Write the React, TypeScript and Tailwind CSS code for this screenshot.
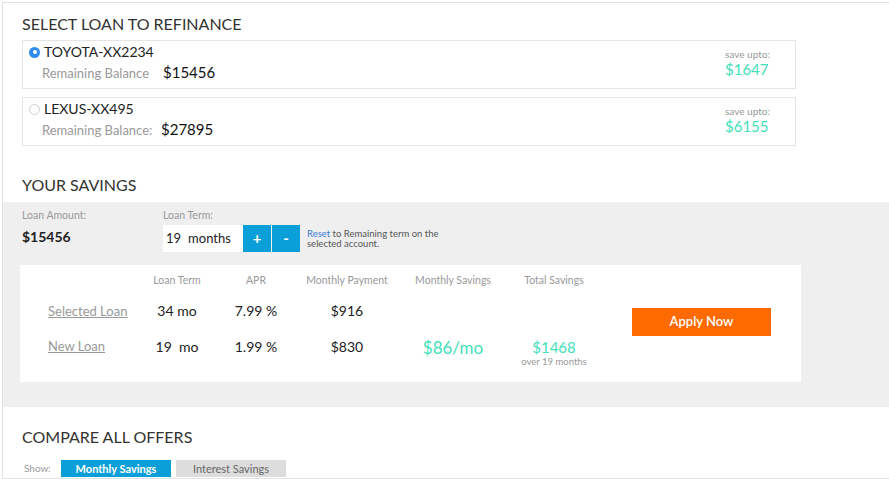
import React, { useState } from 'react';

const loans = [
  { id: 'toyota', name: 'TOYOTA-XX2234', label: 'Remaining Balance', balance: '$15456', save: '$1647' },
  { id: 'lexus', name: 'LEXUS-XX495', label: 'Remaining Balance:', balance: '$27895', save: '$6155' },
];

export default function App() {
  const [selected, setSelected] = useState('toyota');
  const [term, setTerm] = useState(19);
  const [mode, setMode] = useState<'monthly' | 'interest'>('monthly');

  return (
    <div className="w-[889px] h-[479px] bg-white overflow-hidden pt-[2px] pl-[2px] font-['Lato','Open_Sans',sans-serif] text-[#222]">
      <div className="h-full border-l border-t border-[#e3e3e3] border-b">
        <h2 className="pl-[19px] pt-[10px] text-[16px] leading-[22px] text-[#333]">SELECT LOAN TO REFINANCE</h2>

        <div className="mt-[5px] ml-[19px] w-[774px] flex flex-col gap-[8px]">
          {loans.map((loan) => (
            <div
              key={loan.id}
              onClick={() => setSelected(loan.id)}
              className="h-[49px] border border-[#e5e5e5] flex justify-between cursor-pointer"
            >
              <div className="pl-[6px] pt-[2px]">
                <div className="flex items-center gap-[4px]">
                  {selected === loan.id ? (
                    <span className="w-[11px] h-[11px] rounded-full bg-[#2d8cf0] flex items-center justify-center">
                      <span className="w-[4px] h-[4px] rounded-full bg-white" />
                    </span>
                  ) : (
                    <span className="w-[11px] h-[11px] rounded-full border border-[#d0d0d0] bg-white" />
                  )}
                  <span className="text-[14px] leading-[18px] text-[#222]">{loan.name}</span>
                </div>
                <div className="flex items-baseline pl-[13px] mt-[2px] leading-[18px]">
                  <span className={`text-[13px] text-[#999] ${loan.id === 'toyota' ? 'w-[121px]' : 'w-[119px]'}`}>{loan.label}</span>
                  <span className="text-[15px] text-[#111]">{loan.balance}</span>
                </div>
              </div>
              <div className="w-[70px] pt-[7px]">
                <div className="text-[10px] leading-[12px] text-[#999]">save upto:</div>
                <div className="text-[15px] leading-[18px] text-[#43dfba]">{loan.save}</div>
              </div>
            </div>
          ))}
        </div>

        <h2 className="pl-[19px] mt-[28px] text-[16px] leading-[22px] text-[#333]">YOUR SAVINGS</h2>

        <div className="mt-[6px] bg-[#efefef] h-[205px] pt-[7px]">
          <div className="flex pl-[19px]">
            <div className="w-[141px]">
              <div className="text-[10.5px] leading-[13px] text-[#999]">Loan Amount:</div>
              <div className="text-[14px] font-bold text-[#222] mt-[4px]">$15456</div>
            </div>
            <div>
              <div className="text-[10.5px] leading-[13px] text-[#999]">Loan Term:</div>
              <div className="flex items-center mt-[3px]">
                <div className="w-[80px] h-[27px] bg-white flex items-center pl-[3px] text-[13px] text-[#222]">
                  <span>{term}</span>
                  <span className="ml-[7px]">months</span>
                </div>
                <button
                  onClick={() => setTerm(term + 1)}
                  className="w-[28px] h-[27px] bg-[#0a9fd8] text-white text-[15px] font-bold flex items-center justify-center"
                >
                  +
                </button>
                <button
                  onClick={() => setTerm(Math.max(1, term - 1))}
                  className="ml-[1px] w-[28px] h-[27px] bg-[#0a9fd8] text-white text-[15px] font-bold flex items-center justify-center"
                >
                  -
                </button>
                <div className="ml-[7px] text-[9.5px] leading-[10px] text-[#555]">
                  <span className="text-[#3a7bd5]">Reset</span> to Remaining term on the
                  <br />
                  selected account.
                </div>
              </div>
            </div>
          </div>

          <div className="mt-[13px] ml-[17px] w-[781px] h-[117px] bg-white flex">
            <div className="w-[130px] pt-[38px] pl-[28px] text-[13px] text-[#999]">
              <div className="underline leading-[16px]">Selected Loan</div>
              <div className="underline leading-[16px] mt-[19px]">New Loan</div>
            </div>
            <div className="w-[54px] text-center">
              <div className="text-[10.5px] text-[#999] mt-[9px] leading-[12px]">Loan Term</div>
              <div className="text-[14px] mt-[16px] leading-[18px]">34 mo</div>
              <div className="text-[14px] mt-[18px] leading-[18px]">19&nbsp; mo</div>
            </div>
            <div className="w-[56px] text-center ml-[24px]">
              <div className="text-[10.5px] text-[#999] mt-[9px] leading-[12px]">APR</div>
              <div className="text-[14px] mt-[16px] leading-[18px]">7.99 %</div>
              <div className="text-[14px] mt-[18px] leading-[18px]">1.99 %</div>
            </div>
            <div className="w-[100px] text-center ml-[13px]">
              <div className="text-[10.5px] text-[#999] mt-[9px] leading-[12px]">Monthly Payment</div>
              <div className="text-[14px] mt-[16px] leading-[18px]">$916</div>
              <div className="text-[14px] mt-[18px] leading-[18px]">$830</div>
            </div>
            <div className="w-[100px] text-center ml-[6px]">
              <div className="text-[10.5px] text-[#999] mt-[9px] leading-[12px]">Monthly Savings</div>
              <div className="text-[17px] text-[#43dfba] mt-[52px] leading-[20px]">$86/mo</div>
            </div>
            <div className="w-[102px] text-center">
              <div className="text-[10.5px] text-[#999] mt-[9px] leading-[12px]">Total Savings</div>
              <div className="text-[15px] text-[#43dfba] mt-[52px] leading-[18px]">$1468</div>
              <div className="text-[9.5px] text-[#999] leading-[11px]">over 19 months</div>
            </div>
            <div className="pl-[27px] pt-[43px]">
              <button className="w-[139px] h-[28px] bg-[#ff6a00] text-white text-[13px] font-semibold">Apply Now</button>
            </div>
          </div>
        </div>

        <h2 className="pl-[19px] mt-[19px] text-[16px] leading-[22px] text-[#333]">COMPARE ALL OFFERS</h2>

        <div className="flex items-center pl-[21px] mt-[12px]">
          <span className="text-[10px] text-[#999] w-[37px]">Show:</span>
          <button
            onClick={() => setMode('monthly')}
            className={`w-[110px] h-[17px] text-[11px] leading-[17px] ${mode === 'monthly' ? 'bg-[#0a9fd8] text-white font-bold' : 'bg-[#ddd] text-[#666]'}`}
          >
            Monthly Savings
          </button>
          <button
            onClick={() => setMode('interest')}
            className={`ml-[5px] w-[110px] h-[17px] text-[11px] leading-[17px] ${mode === 'interest' ? 'bg-[#0a9fd8] text-white font-bold' : 'bg-[#ddd] text-[#666]'}`}
          >
            Interest Savings
          </button>
        </div>
      </div>
    </div>
  );
}
